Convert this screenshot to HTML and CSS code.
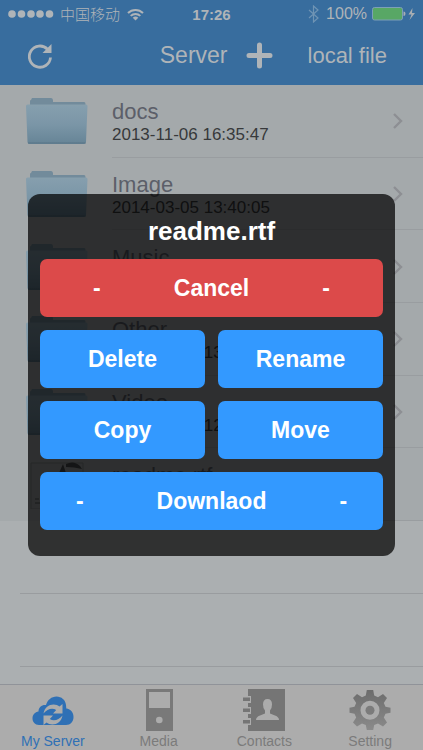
FILE: index.html
```html
<!DOCTYPE html>
<html lang="en">
<head>
  <meta charset="UTF-8">
  <meta name="viewport" content="width=device-width, initial-scale=1.0">
  <title>My Server</title>
  <link rel="stylesheet" href="styles.css">
</head>
<body>

  <!-- Shared icons -->
  <svg class="defs" width="0" height="0" aria-hidden="true">
    <defs>
      <linearGradient id="folderFill" x1="0" y1="0" x2="0" y2="1">
        <stop offset="0" stop-color="#869fae"/>
        <stop offset="0.5" stop-color="#7b96a7"/>
        <stop offset="1" stop-color="#668496"/>
      </linearGradient>
      <linearGradient id="gearFill" x1="0" y1="0" x2="0" y2="1">
        <stop offset="0" stop-color="#6c6c6c"/>
        <stop offset="1" stop-color="#8a8a8a"/>
      </linearGradient>
    </defs>
    <symbol id="folder" viewBox="0 0 62 48">
      <path d="M4 10V4q0-1 1-1l1-2h19q1.500 0 2 2v2h31q1.500 0 1.500 2v4H4z" fill="#728b9b"/>
      <path d="M0 9q0-1.500 1.500-1.500H60q1.500 0 1.500 1.500L60 45q0 2-2 2H3.500q-2 0-2-2z" fill="url(#folderFill)"/>
      <path d="M1 8.500h60" stroke="#879fac" fill="none"/>
      <path d="M2 46h57.500" stroke="#587485" stroke-width="1.200" fill="none"/>
    </symbol>
    <symbol id="chevron" viewBox="0 0 12 18">
      <path d="M2 2l7 7-7 7" fill="none" stroke="#8d8f93" stroke-width="2.400"/>
    </symbol>
  </svg>

  <div class="app">
    <header class="header">
      <div class="status-bar">
        <div class="status-left">
          <svg width="46" height="10" viewBox="0 0 46 10" fill="currentColor">
            <circle cx="4" cy="5" r="3.800"/><circle cx="13.500" cy="5" r="3.800"/><circle cx="23" cy="5" r="3.800"/><circle cx="32" cy="5" r="3.800"/><circle cx="41.500" cy="5" r="3.800"/>
          </svg>
          <span class="carrier" lang="zh-CN">中国移动</span>
          <svg width="17" height="13" viewBox="0 0 17 13" fill="none" stroke="currentColor" stroke-width="2">
            <path d="M1 5a10.600 10.600 0 0 1 15 0M3.700 7.900a6.800 6.800 0 0 1 9.600 0"/>
            <path d="M8.500 12.500L5.700 9.800a4 4 0 0 1 5.600 0z" fill="currentColor" stroke="none"/>
          </svg>
        </div>
        <span class="time">17:26</span>
        <div class="status-right">
          <svg class="bluetooth" width="11" height="18" viewBox="0 0 11 18" fill="none" stroke="currentColor" stroke-width="1.200">
            <path d="M1 5l9 8-4.500 4V1L10 5l-9 8"/>
          </svg>
          <span class="percent">100%</span>
          <svg width="43" height="14" viewBox="0 0 43 14">
            <rect x="0.500" y="0.500" width="30" height="12.500" rx="2" fill="#58a765" stroke="#7d9fb8"/>
            <path d="M31.500 4.500q2 0 2 2.300t-2 2.300z" fill="#a9aeb2"/>
            <path d="M40.500 1l-4 6.500h3L37.500 13l5.500-7h-3z" fill="#a9aeb2"/>
          </svg>
        </div>
      </div>
      <nav class="nav-bar">
        <button class="icon-button" aria-label="Refresh">
          <svg width="28" height="28" viewBox="0 0 28 28">
            <path d="M21.500 7.200A10.600 10.600 0 1 0 24.500 15.500" fill="none" stroke="currentColor" stroke-width="2.800"/>
            <path d="M25.500 2v9h-9l3.300-3.300z" fill="currentColor"/>
          </svg>
        </button>
        <div class="nav-title">
          <h1>Server</h1>
          <button class="icon-button" aria-label="Add">
            <svg width="27" height="27" viewBox="0 0 27 27" fill="none" stroke="currentColor" stroke-width="5" stroke-linecap="round">
              <path d="M13.500 3v21M3 13.500h21"/>
            </svg>
          </button>
        </div>
        <a class="nav-link" href="#">local file</a>
      </nav>
    </header>

    <main class="content">
      <ul class="file-list">
        <li class="file">
          <svg class="file-icon"><use href="#folder"/></svg>
          <div class="file-info">
            <span class="file-name">docs</span>
            <span class="file-date">2013-11-06 16:35:47</span>
          </div>
          <svg class="chevron"><use href="#chevron"/></svg>
        </li>
        <li class="file">
          <svg class="file-icon"><use href="#folder"/></svg>
          <div class="file-info">
            <span class="file-name">Image</span>
            <span class="file-date">2014-03-05 13:40:05</span>
          </div>
          <svg class="chevron"><use href="#chevron"/></svg>
        </li>
        <li class="file">
          <svg class="file-icon"><use href="#folder"/></svg>
          <div class="file-info">
            <span class="file-name">Music</span>
            <span class="file-date">2014-03-05 13:40:05</span>
          </div>
          <svg class="chevron"><use href="#chevron"/></svg>
        </li>
        <li class="file">
          <svg class="file-icon"><use href="#folder"/></svg>
          <div class="file-info">
            <span class="file-name">Other</span>
            <span class="file-date">2014-03-05 13:40:05</span>
          </div>
          <svg class="chevron"><use href="#chevron"/></svg>
        </li>
        <li class="file">
          <svg class="file-icon"><use href="#folder"/></svg>
          <div class="file-info">
            <span class="file-name">Video</span>
            <span class="file-date">2014-03-05 12:40:05</span>
          </div>
          <svg class="chevron"><use href="#chevron"/></svg>
        </li>
        <li class="file">
          <svg class="file-icon" viewBox="0 0 62 48">
            <path d="M5 2v46h52V2z" fill="#a3a7a9" stroke="#85898b"/>
            <path d="M33 12l4-9 3 9zM40 3q8-4 14 2l2 3q-8-2-16-2z" fill="#4a4d4f"/>
            <path d="M9 38h4M9 42h5" stroke="#55585a"/>
          </svg>
          <div class="file-info">
            <span class="file-name">readme.rtf</span>
            <span class="file-date">2014-03-05 13:40:05</span>
          </div>
        </li>
      </ul>
      <div class="empty-row"></div>
      <div class="empty-row"></div>
    </main>

    <nav class="tab-bar">
      <a class="tab active" href="#">
        <svg width="42" height="42" viewBox="0 0 42 42">
          <path d="M7 36C3 36 0.500 33 0.500 29.500c0-4 2.500-6.500 6-7C6.500 18 10 15.500 14 16c1.500-5 5.500-8.500 10.500-8.500 5 0 9 3.500 9.500 8.500l.3 3.500c4.500.5 7.200 4 7.200 8.500 0 4.500-3 8-7.500 8z" fill="currentColor"/>
          <g id="syncArrow" fill="#acacac">
            <path d="M11.500 24.500C12.500 18.500 17 15.500 21.500 15.500c2.500 0 4.500.8 6 2l3-2.500v9.500h-9.500l3.200-3.500c-4-2.500-9-1-12.700 3.500z"/>
          </g>
          <use href="#syncArrow" transform="rotate(180 21 25.500)"/>
        </svg>
        <span>My Server</span>
      </a>
      <a class="tab" href="#">
        <svg width="42" height="42" viewBox="0 0 42 42">
          <path d="M8 0h27v42H8z" fill="#797979"/>
          <path d="M11 3h21v16H11z" fill="#acacac"/>
          <circle cx="21.300" cy="31" r="3.300" fill="#acacac"/>
        </svg>
        <span>Media</span>
      </a>
      <a class="tab" href="#">
        <svg width="42" height="42" viewBox="0 0 42 42">
          <path d="M5 0h37v42H5v-6h3v-7H5v-4h3v-7H5v-4h3V7H5z" fill="#757575"/>
          <path d="M0 8.500h7V12H0zM0 19.500h7V23H0zM0 31h7v3.500H0z" fill="#757575"/>
          <path d="M13 31q0-3 4-4.500l5-2v-3q-2-2-2-6 0-5.500 4.500-5.500t4.500 5.500q0 4-2 6v3l5 2q4 1.500 4 4.500z" fill="#acacac"/>
        </svg>
        <span>Contacts</span>
      </a>
      <a class="tab" href="#">
        <svg width="42" height="42" viewBox="0 0 42 42" fill="url(#gearFill)">
          <path fill-rule="evenodd" d="M17.800 1h6.400l1 5.500 3.800 1.700 5-3.200 4 4-3.200 5 1.700 3.800 5 1v5l-5 1-1.700 3.800 3.200 5-4 4-5-3.200-3.800 1.700-1 5h-6.400l-1-5-3.800-1.700-5 3.200-4-4 3.200-5-1.700-3.800-5-1v-5l5-1 1.700-3.800-3.200-5 4-4 5 3.200 3.800-1.700zM21 11.700a9.500 9.500 0 1 0 0 19 9.500 9.500 0 1 0 0-19z"/>
          <circle cx="21" cy="21.200" r="4.500" fill="#7b7b7b"/>
        </svg>
        <span>Setting</span>
      </a>
    </nav>

    <!-- File action menu -->
    <div class="overlay">
      <div class="menu" role="dialog" aria-labelledby="menuTitle">
        <h2 class="menu-title" id="menuTitle">readme.rtf</h2>
        <div class="menu-buttons">
          <button class="menu-button wide cancel"><span>-</span><span>Cancel</span><span>-</span></button>
          <button class="menu-button">Delete</button>
          <button class="menu-button">Rename</button>
          <button class="menu-button">Copy</button>
          <button class="menu-button">Move</button>
          <button class="menu-button wide"><span>-</span><span>Downlaod</span><span>-</span></button>
        </div>
      </div>
    </div>
  </div>

</body>
</html>
```
FILE: styles.css
```css
* {
  box-sizing: border-box;
}

body {
  margin: 0;
  font-family: "Liberation Sans", "Noto Sans CJK SC", sans-serif;
  background: #abafb1;
}

button {
  border: none;
  padding: 0;
  background: none;
  color: inherit;
  font-family: inherit;
  cursor: pointer;
}

a {
  color: inherit;
  text-decoration: none;
}

svg {
  display: block;
  flex-shrink: 0;
}

.defs {
  position: absolute;
}

.app {
  display: flex;
  flex-direction: column;
  min-height: 100vh;
  position: relative;
}

/* Header */
.header {
  background-color: #386d9e;
  color: #afb4b8;
}

.status-bar {
  display: grid;
  grid-template-columns: 1fr auto 1fr;
  align-items: center;
  height: 28px;
  padding: 0 8px;
}

.status-left,
.status-right {
  display: flex;
  align-items: center;
}

.status-right {
  justify-content: flex-end;
}

.carrier {
  margin: 0 7px 0 6px;
  font-family: "Noto Sans CJK SC", sans-serif;
  font-size: 15px;
  font-weight: 300;
  line-height: 20px;
}

.time {
  font-size: 15px;
  font-weight: 700;
}

.bluetooth {
  color: #6f94b4;
}

.percent {
  margin: 0 5px 0 7px;
  font-size: 16px;
}

.nav-bar {
  display: flex;
  align-items: center;
  height: 57px;
  padding: 0 36px 2px 26px;
}

.nav-title {
  display: flex;
  align-items: center;
  gap: 18px;
  margin: 0 35px 0 auto;
}

.nav-title h1 {
  margin: 0;
  font-size: 23px;
  font-weight: 400;
}

.nav-link {
  font-size: 22px;
}

/* File list */
.content {
  flex: 1;
}

.file-list {
  display: grid;
  grid-auto-rows: 1fr;
  min-height: 436px;
  margin: 0;
  padding: 0;
  list-style: none;
  background-color: #a4a9ab;
}

.file {
  display: flex;
  align-items: center;
  padding: 0 19px 0 26px;
}

.file-icon {
  width: 62px;
  height: 48px;
}

.file-info {
  display: flex;
  flex: 1;
  flex-direction: column;
  align-self: stretch;
  justify-content: center;
  margin: 0 -31px 0 24px;
  padding-top: 3px;
  border-bottom: 1px solid #999da0;
}

.file-name {
  color: #5c5f69;
  font-size: 22px;
  line-height: 26px;
}

.file-date {
  color: #37393b;
  font-size: 17px;
  line-height: 20px;
}

.chevron {
  width: 12px;
  height: 18px;
}

.empty-row {
  height: 73px;
  margin-left: 20px;
  border-bottom: 1px solid #999c9f;
}

/* Tab bar */
.tab-bar {
  display: grid;
  grid-template-columns: repeat(4, 1fr);
  height: 66px;
  padding-top: 4px;
  border-top: 1px solid #909399;
  background-color: #acacac;
}

.tab {
  display: flex;
  flex-direction: column;
  align-items: center;
  color: #7b7b7b;
  font-size: 14px;
  line-height: 20px;
}

.tab.active {
  color: #2f70b5;
}

/* Menu popup */
.overlay {
  position: absolute;
  inset: 0;
  display: flex;
  align-items: center;
  justify-content: center;
  padding: 0 28px;
}

.menu {
  width: 100%;
  max-width: 420px;
  padding: 22px 12px 26px;
  border-radius: 12px;
  background-color: rgba(0, 0, 0, 0.72);
  color: #fff;
}

.menu-title {
  margin: 0 0 13px;
  font-size: 26px;
  line-height: 30px;
  text-align: center;
}

.menu-buttons {
  display: grid;
  grid-template-columns: 1fr 1fr;
  gap: 13px;
}

.menu-button {
  display: flex;
  align-items: center;
  justify-content: center;
  height: 58px;
  border-radius: 7px;
  background-color: #3399ff;
  font-size: 23px;
  font-weight: 700;
}

.menu-button.wide {
  grid-column: span 2;
  gap: 73px;
}

.menu-button.cancel {
  background-color: #dc4a4a;
}
```
